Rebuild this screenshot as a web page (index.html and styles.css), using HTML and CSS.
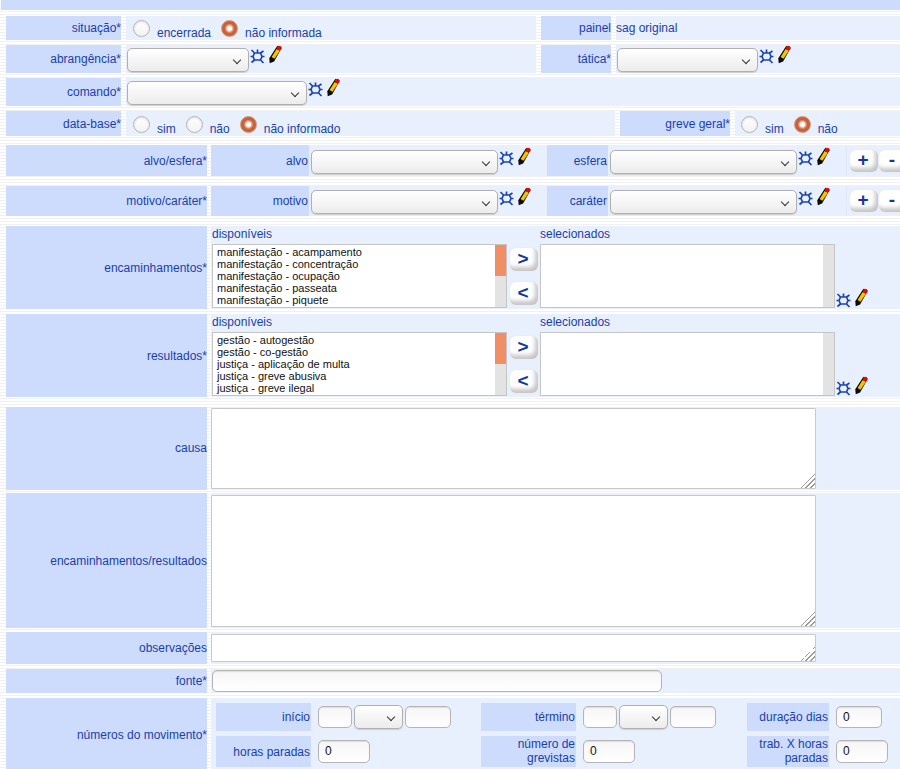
FILE: index.html
```html
<!DOCTYPE html>
<html lang="pt">
<head>
<meta charset="utf-8">
<title>Formulário</title>
<link rel="stylesheet" href="styles.css">
</head>
<body>
<svg class="defs" width="0" height="0" aria-hidden="true">
  <symbol id="star" viewBox="0 0 15 15">
    <path d="M4.500 4H10.500L12 7.500 10.500 11H4.500L3 7.500ZM1.500 1 4.500 4M7.500 .5V4M13.500 2 10.500 4M.5 7.500H3M12 7.500H14.500M1.500 13.500 4.500 11M13.500 14 10.500 11" fill="none" stroke="#1a44b0" stroke-width="1.700"/>
  </symbol>
  <symbol id="pencil" viewBox="0 0 14 20">
    <path d="M9 .5 13.800 2.800 5.500 17.500 .8 19.500 .3 14Z" fill="#0c0c0c"/>
    <path d="M8.200 4 11.800 6 5.800 14.500 2.800 12.800Z" fill="#f4c400"/>
    <circle cx="11" cy="3" r="2.500" fill="#dc0c0c"/>
  </symbol>
</svg>
<form class="form">
  <div class="row top"></div>
  <div class="row r1">
    <div class="lab w1">situação*</div>
    <div class="val grow">
      <span class="radio"></span><span class="opt">encerrada</span>
      <span class="radio on"></span><span class="opt">não informada</span>
    </div>
    <div class="lab w-painel">painel</div>
    <div class="val fixed-r">sag original</div>
  </div>
  <div class="row r2">
    <div class="lab w1">abrangência*</div>
    <div class="val grow sel-val">
      <span class="select s122"></span>
      <svg class="star"><use href="#star"/></svg><svg class="pencil"><use href="#pencil"/></svg>
    </div>
    <div class="lab w-painel">tática*</div>
    <div class="val fixed-r sel-val">
      <span class="select s141"></span>
      <svg class="star"><use href="#star"/></svg><svg class="pencil"><use href="#pencil"/></svg>
    </div>
  </div>
  <div class="row r2">
    <div class="lab w1">comando*</div>
    <div class="val fill sel-val">
      <span class="select s180"></span>
      <svg class="star"><use href="#star"/></svg><svg class="pencil"><use href="#pencil"/></svg>
    </div>
  </div>
  <div class="row r4">
    <div class="lab w1">data-base*</div>
    <div class="val grow">
      <span class="radio"></span><span class="opt">sim</span>
      <span class="radio"></span><span class="opt">não</span>
      <span class="radio on"></span><span class="opt">não informado</span>
    </div>
    <div class="lab w-greve">greve geral*</div>
    <div class="val fixed-g">
      <span class="radio"></span><span class="opt">sim</span>
      <span class="radio on"></span><span class="opt">não</span>
    </div>
  </div>
  <div class="row split r5">
    <div class="lab w2">alvo/esfera*</div>
    <div class="lab w-sub">alvo</div>
    <div class="val v-a">
      <span class="select s187"></span>
      <svg class="star"><use href="#star"/></svg><svg class="pencil"><use href="#pencil"/></svg>
    </div>
    <div class="lab w-sub2">esfera</div>
    <div class="val v-a">
      <span class="select s187"></span>
      <svg class="star"><use href="#star"/></svg><svg class="pencil"><use href="#pencil"/></svg>
    </div>
    <div class="val fill btns"><button type="button" class="btn">+</button><button type="button" class="btn">-</button></div>
  </div>
  <div class="row split r6">
    <div class="lab w2">motivo/caráter*</div>
    <div class="lab w-sub">motivo</div>
    <div class="val v-a">
      <span class="select s187"></span>
      <svg class="star"><use href="#star"/></svg><svg class="pencil"><use href="#pencil"/></svg>
    </div>
    <div class="lab w-sub2">caráter</div>
    <div class="val v-a">
      <span class="select s187"></span>
      <svg class="star"><use href="#star"/></svg><svg class="pencil"><use href="#pencil"/></svg>
    </div>
    <div class="val fill btns"><button type="button" class="btn">+</button><button type="button" class="btn">-</button></div>
  </div>
  <div class="row r7">
    <div class="lab w2">encaminhamentos*</div>
    <div class="val fill picker">
      <div class="col">
        <div class="cap">disponíveis</div>
        <div class="list">
          <div class="items"><div>manifestação - acampamento</div><div>manifestação - concentração</div><div>manifestação - ocupação</div><div>manifestação - passeata</div><div>manifestação - piquete</div></div>
          <div class="track"><div class="thumb"></div></div>
        </div>
      </div>
      <div class="arrows"><button type="button" class="btn arrow">&gt;</button><button type="button" class="btn arrow">&lt;</button></div>
      <div class="col">
        <div class="cap">selecionados</div>
        <div class="list"><div class="items"></div><div class="track"></div></div>
      </div>
      <div class="tools"><svg class="star"><use href="#star"/></svg><svg class="pencil"><use href="#pencil"/></svg></div>
    </div>
  </div>
  <div class="row r8">
    <div class="lab w2">resultados*</div>
    <div class="val fill picker">
      <div class="col">
        <div class="cap">disponíveis</div>
        <div class="list">
          <div class="items"><div>gestão - autogestão</div><div>gestão - co-gestão</div><div>justiça - aplicação de multa</div><div>justiça - greve abusiva</div><div>justiça - greve ilegal</div></div>
          <div class="track"><div class="thumb"></div></div>
        </div>
      </div>
      <div class="arrows"><button type="button" class="btn arrow">&gt;</button><button type="button" class="btn arrow">&lt;</button></div>
      <div class="col">
        <div class="cap">selecionados</div>
        <div class="list"><div class="items"></div><div class="track"></div></div>
      </div>
      <div class="tools"><svg class="star"><use href="#star"/></svg><svg class="pencil"><use href="#pencil"/></svg></div>
    </div>
  </div>
  <div class="row r9">
    <div class="lab w2">causa</div>
    <div class="val fill"><textarea class="area a-causa"></textarea></div>
  </div>
  <div class="row r10">
    <div class="lab w2">encaminhamentos/resultados</div>
    <div class="val fill"><textarea class="area a-enc"></textarea></div>
  </div>
  <div class="row r11">
    <div class="lab w2">observações</div>
    <div class="val fill"><textarea class="area a-obs"></textarea></div>
  </div>
  <div class="row r12">
    <div class="lab w2">fonte*</div>
    <div class="val fill"><span class="input i-fonte"></span></div>
  </div>
  <div class="row r13">
    <div class="lab w2">números do movimento*</div>
    <div class="val fill nums">
      <div class="nlab">início</div>
      <div class="nval"><span class="input i-d"></span><span class="select s-m"></span><span class="input i-y"></span></div>
      <div class="nlab">término</div>
      <div class="nval"><span class="input i-d"></span><span class="select s-m"></span><span class="input i-y"></span></div>
      <div class="nlab">duração dias</div>
      <div class="nval"><span class="input i-46">0</span></div>
      <div class="nlab">horas paradas</div>
      <div class="nval"><span class="input i-52">0</span></div>
      <div class="nlab two">número de grevistas</div>
      <div class="nval"><span class="input i-52">0</span></div>
      <div class="nlab two">trab. X horas paradas</div>
      <div class="nval"><span class="input i-52">0</span></div>
    </div>
  </div>
</form>
</body>
</html>
```
FILE: styles.css
```css
* { box-sizing: border-box; }
html, body { margin: 0; height: 769px; overflow: hidden; background: #fff; }
body { font: 12px/14px "Liberation Sans", Arial, sans-serif; color: #1a3fa8; }
.defs { position: absolute; }
.form { display: flex; flex-direction: column; padding-left: 6px; width: 900px; height: 769px; overflow: hidden; background: repeating-linear-gradient(#fff 0 2px, #f1f1f1 2px 3px); }
.row { display: flex; gap: 4px; flex: none; }
.top { height: 10px; background: #cddcfd; margin: 0 0 6px -5px; }
.r1 { height: 24px; gap: 5px; }
.r2 { height: 28px; margin-top: 5px; gap: 5px; }
.r4 { height: 25px; margin-top: 5px; gap: 5px; }
.split { gap: 0; }
.r5 { height: 31px; margin-top: 9px; }
.r6 { height: 30px; margin-top: 10px; }
.r7 { height: 83px; margin-top: 10px; }
.r8 { height: 83px; margin-top: 5px; }
.r9 { height: 83px; margin-top: 10px; }
.r10 { height: 135px; margin-top: 3px; }
.r11 { height: 32px; margin-top: 4px; }
.r12 { height: 24px; margin-top: 5px; }
.r13 { height: 71px; margin-top: 5px; }
.lab { background: #cddcfd; display: flex; align-items: center; justify-content: flex-end; text-align: right; flex: none; }
.r9 .lab { padding-bottom: 1px; }
.r13 .lab { padding-top: 2px; }
.val { background: #e8effd; display: flex; align-items: center; }
.w1 { width: 115px; }
.w2 { width: 201px; }
.split .w2 { margin-right: 4px; }
.w-painel { width: 70px; }
.w-greve { width: 110px; }
.w-sub { width: 98px; padding-right: 1px; }
.w-sub2 { width: 61px; padding-right: 1px; }
.grow { flex: 1; padding-left: 7px; }
.fill { flex: 1; }
.fixed-r { width: 284px; }
.fixed-g { width: 165px; padding-left: 6px; }
.sel-val { padding-left: 1px; align-items: flex-start; }
.v-a { width: 238px; padding-left: 2px; align-items: flex-start; flex: none; }
.r5 .v-a, .r5 .btns { padding-top: 2px; }
.r6 .v-a, .r6 .btns { padding-top: 1px; }
.radio { width: 17px; height: 17px; border-radius: 50%; border: 1px solid #b5b5b5; background: linear-gradient(#fff, #f2f2f2); flex: none; align-self: flex-start; margin-top: 4px; box-shadow: inset 0 1px 2px #ddd; }
.radio.on { border: 1px solid #d69274; background: radial-gradient(circle, #fff 0 2px, #eeb79f 3px, #c8613a 5px, #c8613a 7px, #d27a55 8px); box-shadow: none; }
.opt { margin: 8px 10px 0 7px; align-self: flex-start; line-height: 14px; padding-top: 2px; }
.r4 .radio { margin-top: 5px; }
.r4 .opt { margin-top: 9px; }
.select { display: block; height: 24px; border: 1px solid #b0b0b0; border-radius: 5px; background: linear-gradient(#fff, #ececec); position: relative; flex: none; margin-top: 3px; box-shadow: 0 1px 1px #ccc; }
.select::after { content: ""; position: absolute; right: 8px; top: 8px; width: 5px; height: 5px; border-right: 1.500px solid #333; border-bottom: 1.500px solid #333; transform: rotate(45deg); }
.s122 { width: 122px; }
.s141 { width: 141px; }
.s180 { width: 180px; }
.s187 { width: 187px; }
.star { width: 15px; height: 15px; flex: none; margin: 4px 0 0 1px; }
.pencil { width: 13px; height: 19px; flex: none; margin: 0 0 0 4px; }
.btns { padding-left: 3px; gap: 1px; border-left: 1px solid #dfe7f8; align-items: flex-start; }
.btn { width: 28px; height: 22px; margin-top: 3px; border: 0; border-radius: 6px; background: #fff; box-shadow: inset -3px -4px 4px #c6c6c6, 0 0 1px #ddd; color: #12389c; font: bold 19px/20px "Liberation Sans", Arial, sans-serif; padding: 0 2px 2px 0; flex: none; }
.picker { align-items: flex-start; padding-left: 1px; }
.col { flex: none; }
.cap { height: 18px; line-height: 17px; }
.list { width: 295px; height: 64px; display: flex; border: 1px solid #c5c5c5; background: #fff; }
.items { flex: 1; padding: 1px 4px; font-size: 11px; line-height: 12px; color: #111; overflow: hidden; white-space: nowrap; }
.track { width: 11px; background: #e3e3e3; }
.thumb { height: 31px; background: #f08e66; }
.arrows { width: 33px; padding: 22px 0 0 3px; display: flex; flex-direction: column; gap: 11px; flex: none; }
.arrow { width: 28px; height: 23px; margin: 0; font-size: 19px; }
.tools { display: flex; align-items: flex-end; height: 82px; padding-left: 1px; }
.tools .star { margin: 0; }
.tools .pencil { margin: 0 0 1px 4px; }
.area { display: block; width: 605px; height: 81px; border: 1px solid #c9c9c9; border-radius: 1px; resize: none; padding: 2px; margin: 0; background: linear-gradient(135deg, #fff 50%, transparent 50%) right bottom / 14px 14px no-repeat, repeating-linear-gradient(135deg, #fff 0 2px, #9a9a9a 2px 3.500px) right bottom / 14px 14px no-repeat, #fff; }
.a-enc { height: 132px; }
.a-obs { height: 28px; }
.input { display: block; height: 22px; border: 1px solid #b5b5b5; border-radius: 5px; background: linear-gradient(#f6f6f6, #fff); flex: none; color: #111; font-size: 12px; line-height: 20px; padding-left: 6px; box-shadow: inset 0 1px 1px #ddd; }
.i-fonte { width: 450px; margin-left: 1px; }
.i-d { width: 34px; }
.i-y { width: 46px; }
.s-m { width: 49px; margin-top: 0; }
.i-46 { width: 46px; }
.i-52 { width: 52px; height: 23px; }
.nums { display: grid; grid-template-columns: 95px 170px 95px 171px 82px 1fr; grid-template-rows: 28px 31px; gap: 5px 0; align-content: start; align-items: stretch; padding: 5px 0 0 5px; }
.nlab { background: #cddcfd; display: flex; align-items: center; justify-content: flex-end; text-align: right; padding-right: 1px; line-height: 14px; }
.nlab.two { padding-bottom: 2px; }
.nval { display: flex; align-items: center; gap: 2px; padding-left: 7px; }
```
